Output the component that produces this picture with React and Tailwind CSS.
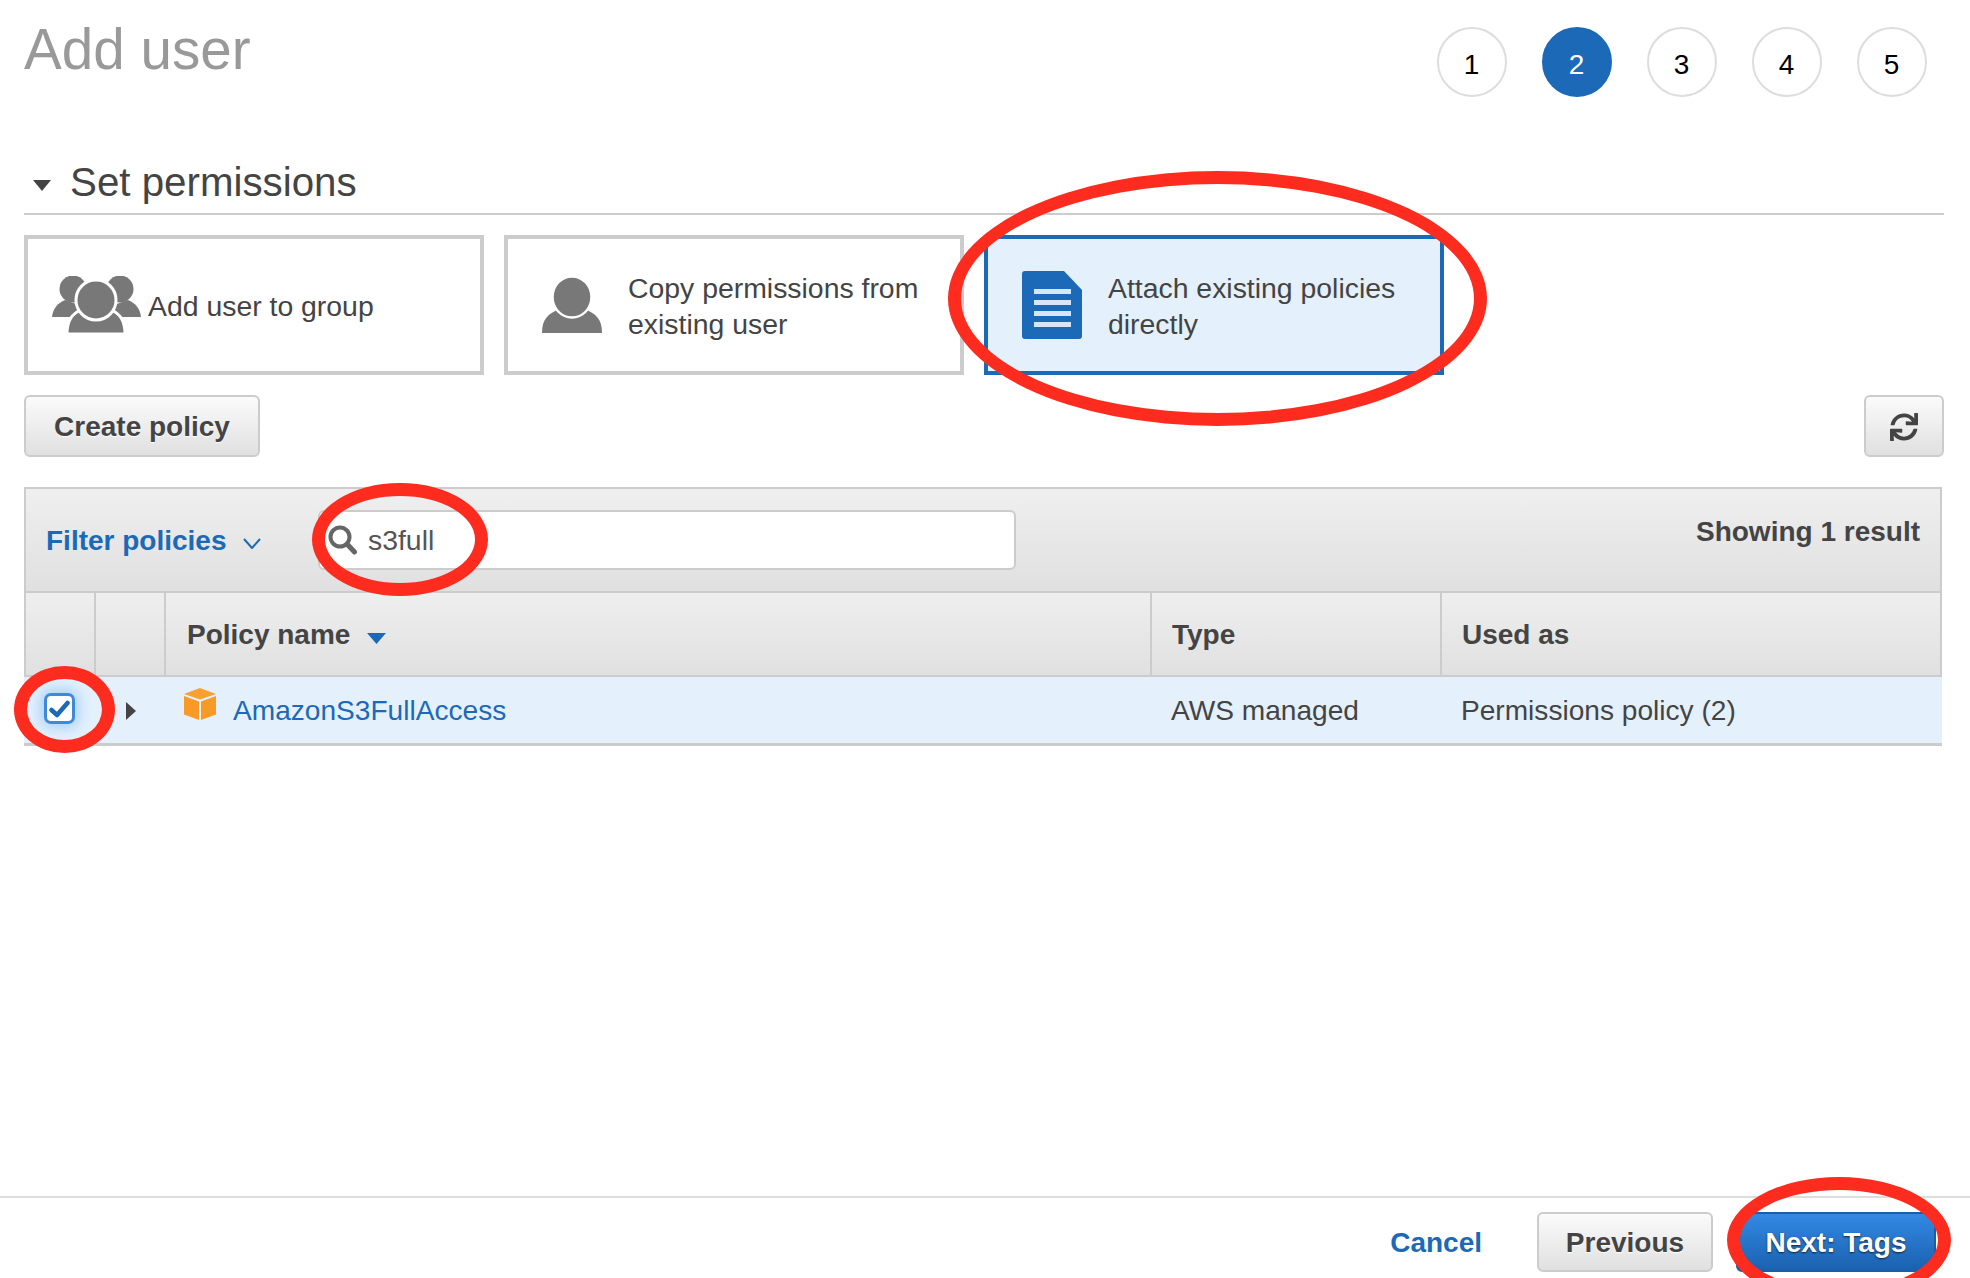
import React from "react";
import { FaSync } from "react-icons/fa";

const COLS = "grid grid-cols-[70px_70px_986px_290px_1fr]";
const BTN =
  "rounded-[6px] border-2 border-[#ccc] bg-linear-to-b from-[#fbfbfb] to-[#e0e0e0] pt-[2px] text-[28px] font-bold text-[#444] [text-shadow:0_1px_1px_#fff]";
const MARK = "absolute rounded-[50%] border-[13px] border-[#fd2c1e]";

function GroupIcon() {
  return (
    <svg width="89" height="58" viewBox="0 0 89 58" className="shrink-0">
      <g fill="#787878">
        <ellipse cx="21" cy="13" rx="13.5" ry="13.5" />
        <ellipse cx="68" cy="13" rx="13.5" ry="13.5" />
        <path d="M0 41 C1 32 6 27 13 24 L30 30 L20 41 Z" />
        <path d="M89 41 C88 32 83 27 76 24 L59 30 L69 41 Z" />
        <path d="M15 58 C15 44 20 38 30 33 H58 C68 38 73 44 73 58 Z" stroke="#fff" strokeWidth="3" />
        <circle cx="44" cy="24" r="20" stroke="#fff" strokeWidth="3" />
      </g>
    </svg>
  );
}

function PersonIcon() {
  return (
    <svg width="60" height="56" viewBox="0 0 60 56" className="shrink-0">
      <g fill="#787878">
        <path d="M0 56 C0 42 6 37 17 32 H43 C54 37 60 42 60 56 Z" />
        <ellipse cx="30" cy="20" rx="19.5" ry="20.5" stroke="#fff" strokeWidth="2.5" />
      </g>
    </svg>
  );
}

function DocIcon() {
  return (
    <svg width="60" height="68" viewBox="0 0 60 68" className="shrink-0">
      <path d="M3 0 H42 L60 19 V65 Q60 68 57 68 H3 Q0 68 0 65 V3 Q0 0 3 0 Z" fill="#1c69b8" />
      <g fill="#d6e6f6">
        <rect x="12" y="18" width="37" height="5" />
        <rect x="12" y="29" width="37" height="5" />
        <rect x="12" y="40" width="37" height="5" />
        <rect x="12" y="51" width="37" height="5" />
      </g>
    </svg>
  );
}

function CubeIcon() {
  return (
    <svg width="32" height="32" viewBox="0 0 32 32" className="shrink-0">
      <path d="M16 0 L32 6 L16 11.5 L0 6 Z" fill="#f9a12e" />
      <path d="M0 8 L15 13.5 V32 L0 26.5 Z" fill="#fa9a26" />
      <path d="M32 8 L17 13.5 V32 L32 26.5 Z" fill="#fa9a26" />
    </svg>
  );
}

function SearchIcon() {
  return (
    <svg width="30" height="30" viewBox="0 0 30 30" className="shrink-0">
      <circle cx="12" cy="12" r="9.5" fill="none" stroke="#666" strokeWidth="4" />
      <path d="M19.5 19.5 L26.5 27" stroke="#666" strokeWidth="5" strokeLinecap="round" />
    </svg>
  );
}

function OptionCard({ icon, selected, className, children }) {
  return (
    <div
      className={
        "flex h-[140px] w-[460px] items-center border-4 " +
        (selected ? "border-[#1c69b8] bg-[#e4f1fd] " : "border-[#ccc] bg-white ") +
        className
      }
    >
      {icon}
      <div className="pt-[2px] text-[28.4px] leading-[36.5px] text-[#444]">{children}</div>
    </div>
  );
}

export default function App() {
  return (
    <div className="relative flex h-[1278px] w-[1970px] flex-col overflow-hidden bg-white font-['Liberation_Sans',Arial,sans-serif]">
      <div className="pl-6 pr-[26px]">
        <div className="flex items-start justify-between pr-[17px] pt-[21px]">
          <h1 className="pt-[1px] text-[56.6px] leading-[56px] text-[#999]">Add user</h1>
          <div className="mt-[6px] flex gap-[35px]">
            {[1, 2, 3, 4, 5].map((n) => (
              <div
                key={n}
                className={
                  "flex h-[70px] w-[70px] items-center justify-center rounded-full border-2 pr-[1px] pt-[5px] text-[28px] " +
                  (n === 2 ? "border-[#1c69b8] bg-[#1c69b8] text-white" : "border-[#ddd] text-black")
                }
              >
                {n}
              </div>
            ))}
          </div>
        </div>

        <div className="mt-[64px] flex items-center gap-[19px] border-b-2 border-[#ccc] pb-3 pl-[9px]">
          <svg width="18" height="11" viewBox="0 0 18 11" className="mt-[9px]">
            <path d="M0 0 H18 L9 11 Z" fill="#444" />
          </svg>
          <h2 className="pt-[3px] text-[40.3px] leading-[37px] text-[#444]">Set permissions</h2>
        </div>

        <div className="mt-5 flex gap-5">
          <OptionCard icon={<GroupIcon />} className="gap-[7px] pl-6">
            Add user to group
          </OptionCard>
          <OptionCard icon={<PersonIcon />} className="gap-[26px] pl-[34px]">
            Copy permissions from
            <br />
            existing user
          </OptionCard>
          <OptionCard icon={<DocIcon />} selected className="gap-[26px] pl-[34px]">
            Attach existing policies
            <br />
            directly
          </OptionCard>
        </div>

        <div className="mt-5 flex justify-between">
          <button className={BTN + " h-[62px] w-[236px]"}>Create policy</button>
          <button className={BTN + " flex h-[62px] w-[80px] items-center justify-center"}>
            <FaSync className="text-[28px] text-[#444]" />
          </button>
        </div>

        <div className="mr-[2px] mt-[30px]">
          <div className="flex h-[106px] items-center border-2 border-[#ccc] bg-linear-to-b from-[#efefef] to-[#e0e0e0] pl-5 pr-[20px]">
            <div className="flex w-[272px] items-center pt-[1px] text-[28px] font-bold text-[#1c69b8]">
              Filter policies
              <svg width="18" height="11" viewBox="0 0 18 11" className="ml-[16px] mt-[6px]">
                <path d="M1 1 L9 10 L17 1" fill="none" stroke="#1c69b8" strokeWidth="2" />
              </svg>
            </div>
            <div className="flex h-[60px] w-[698px] items-center gap-[10px] rounded-[6px] border-2 border-[#ccc] bg-white pl-2">
              <SearchIcon />
              <span className="text-[28.4px] text-[#555]">s3full</span>
            </div>
            <div className="mb-[17px] ml-auto text-[28px] font-bold text-[#444]">Showing 1 result</div>
          </div>

          <div className={COLS + " h-[84px] border-x-2 border-b-2 border-[#ccc] bg-linear-to-b from-[#efefef] to-[#e0e0e0] text-[28px] font-bold text-[#444]"}>
            <div className="border-r-2 border-[#ccc]" />
            <div className="border-r-2 border-[#ccc]" />
            <div className="flex items-center gap-[17px] border-r-2 border-[#ccc] pl-[21px] pt-[2px]">
              Policy name
              <svg width="19" height="11" viewBox="0 0 19 11" className="mt-[6px]">
                <path d="M0 0 H19 L9.5 11 Z" fill="#1c69b8" />
              </svg>
            </div>
            <div className="flex items-center border-r-2 border-[#ccc] pl-[20px] pt-[2px]">Type</div>
            <div className="flex items-center pl-[20px] pt-[2px]">Used as</div>
          </div>

          <div className={COLS + " h-[69px] border-b-[3px] border-[#ccc] bg-[#e4f1fd] text-[28.1px] text-[#444]"}>
            <div className="flex items-center justify-center">
              <div className="mb-[3px] flex h-[31px] w-[31px] items-center justify-center rounded-[7px] border-[3px] border-[#3c8ad9] bg-white shadow-[0_0_14px_4px_#a9d0f5]">
                <svg width="21" height="18" viewBox="0 0 21 18">
                  <path d="M2.5 10 L8 15 L18.5 3" fill="none" stroke="#1c69b8" strokeWidth="4.5" strokeLinecap="round" strokeLinejoin="round" />
                </svg>
              </div>
            </div>
            <div className="flex items-center justify-center pl-[3px]">
              <svg width="10" height="18" viewBox="0 0 10 18" className="mt-[2px]">
                <path d="M0 0 L10 9 L0 18 Z" fill="#444" />
              </svg>
            </div>
            <div className="flex items-center gap-[17px] pl-[20px]">
              <div className="mb-[13px]">
                <CubeIcon />
              </div>
              <span className="pt-[2px] text-[#1c69b8]">AmazonS3FullAccess</span>
            </div>
            <div className="flex items-center pl-[21px] pt-[2px]">AWS managed</div>
            <div className="flex items-center pl-[21px] pt-[2px]">Permissions policy (2)</div>
          </div>
        </div>
      </div>

      <div className="mt-auto flex h-[82px] shrink-0 items-start justify-end border-t-2 border-[#ddd] pr-[34px] pt-[14px]">
        <div className="flex h-[60px] items-center pt-[2px] text-[28px] font-bold text-[#1c69b8]">Cancel</div>
        <button className={BTN + " ml-[55px] h-[60px] w-[176px]"}>Previous</button>
        <button className="ml-[23px] h-[60px] w-[200px] shrink-0 rounded-[6px] border-2 border-[#1a5ea6] bg-linear-to-b from-[#3389e4] to-[#1a62b0] pt-[2px] text-[28px] font-bold text-white [text-shadow:0_1px_2px_#123]">
          Next: Tags
        </button>
      </div>

      {/* red annotations drawn over the page */}
      <div className={MARK + " left-[948px] top-[171px] h-[255px] w-[539px]"} />
      <div className={MARK + " left-[312px] top-[483px] h-[113px] w-[176px]"} />
      <div className={MARK + " left-[14px] top-[666px] h-[87px] w-[101px]"} />
      <div className={MARK + " left-[1727px] top-[1177px] h-[126px] w-[224px]"} />
    </div>
  );
}
